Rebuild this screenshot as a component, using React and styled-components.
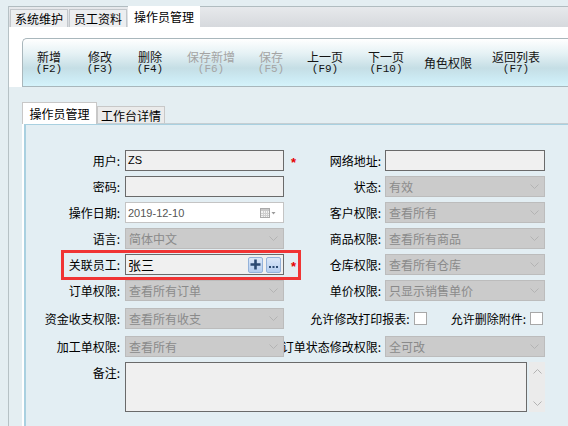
import React from 'react';
import styled, {createGlobalStyle} from 'styled-components';

const GlobalStyle = createGlobalStyle`
  html, body { margin: 0; padding: 0; background: #e4eef2; }
  body {
    font-family: "Noto Sans CJK SC", "Noto Sans", sans-serif;
    font-size: 12px;
    color: #000;
  }
`;

// Shell
const Page = styled.div`
  width: 568px;
  height: 426px;
  overflow: hidden;
  background: #e4eef2;
  padding-left: 8px;
  box-sizing: border-box;
`;
const Frame = styled.div`
  height: 100%;
  border-left: 1px solid #b6c1c5;
`;

// Top tab strip
const TopBar = styled.div`
  display: flex;
  align-items: flex-end;
  height: 20px;
  margin-top: 6px;
  padding-left: 1px;
  border-top: 1px solid #b1bcc0;
  background: linear-gradient(#e7e9ec, #d6d9dd);
`;
const TopTab = styled.div`
  display: flex;
  align-items: center;
  justify-content: center;
  box-sizing: border-box;
  width: ${p => p.$w}px;
  height: ${p => (p.$active ? 21 : 18)}px;
  margin-top: ${p => (p.$active ? -1 : 0)}px;
  padding-bottom: ${p => (p.$active ? 2 : 0)}px;
  background: ${p => (p.$active ? '#fff' : '#eceef0')};
  border: 1px solid ${p => (p.$active ? '#fff' : '#c3c7cb')};
  border-bottom: none;
  margin-right: 1px;
  white-space: nowrap;
`;

// Command ribbon
const Ribbon = styled.div`
  background: #fff;
  padding: 11px 0 0 13px;
`;
const Toolbar = styled.div`
  display: flex;
  height: 49px;
  box-sizing: border-box;
  border: 1px solid #a9b7bc;
  border-right: none;
  border-top-left-radius: 5px;
  background: linear-gradient(#ffffff 0%, #e6f2f5 30%, #c5dee5 62%, #cbe9f2 82%, #d5f3fb 100%);
`;
const ToolButton = styled.div`
  width: ${p => p.$w}px;
  display: flex;
  flex-direction: column;
  align-items: center;
  justify-content: center;
  color: ${p => (p.$off ? '#a4a4a4' : '#141414')};
  line-height: 14px;
`;
const KeyHint = styled.span`
  font-family: "Liberation Mono", monospace;
  font-size: 11px;
  line-height: 11px;
`;

// Body with the inner tabs and form panel
const Body = styled.div`
  padding: 15px 0 0 13px;
`;
const InnerTabs = styled.div`
  display: flex;
  align-items: flex-end;
  height: 21px;
  border-bottom: 1px solid #c5ced2;
`;
const InnerTab = styled.div`
  display: flex;
  align-items: center;
  justify-content: center;
  box-sizing: border-box;
  width: ${p => p.$w}px;
  height: ${p => (p.$active ? 22 : 17)}px;
  margin-bottom: ${p => (p.$active ? -1 : 0)}px;
  background: ${p => (p.$active ? '#fff' : '#ebebeb')};
  border: 1px solid #c8c8c8;
  border-bottom: none;
  white-space: nowrap;
`;
const Panel = styled.div`
  height: 320px;
  background: #e3eef3;
  border-left: 2px solid #fff;
  box-shadow: inset 2px 1px 0 #a9d0e0;
  padding-top: 26px;
`;

// Form rows
const Row = styled.div`
  display: grid;
  grid-template-columns: 101px 159px 101px 160px;
  grid-template-rows: ${p => p.$h || 21}px;
  margin-top: ${p => p.$gap ?? 5}px;
`;
const Cell = styled.div`
  grid-row: 1;
  grid-column: ${p => p.$col};
  min-width: 0;
`;
const Label = styled(Cell)`
  display: flex;
  justify-content: flex-end;
  align-items: ${p => (p.$top ? 'flex-start' : 'center')};
  padding-right: ${p => (p.$col === 1 ? 5 : 4)}px;
  line-height: 21px;
  white-space: nowrap;
  overflow: hidden;
`;
const Star = styled(Cell)`
  justify-self: start;
  align-self: center;
  margin-left: 7px;
  margin-top: 3px;
  color: #e60000;
  font-family: "Liberation Sans", sans-serif;
  font-size: 13px;
  font-weight: bold;
`;
const Highlight = styled(Cell)`
  margin: -4px 84px -5px 37px;
  border: 3px solid #f03434;
  pointer-events: none;
`;
const TextBox = styled(Cell)`
  display: flex;
  align-items: ${p => (p.$top ? 'flex-start' : 'center')};
  gap: 3px;
  box-sizing: border-box;
  border: 1px solid #6a6a6a;
  background: #f0f0f0;
  padding: ${p => (p.$top ? '2px 2px 0 2px' : '0 2px 0 2px')};
  font-size: ${p => (p.$latin ? '11px' : '13px')};
  font-family: ${p => (p.$latin ? '"Liberation Sans", sans-serif' : 'inherit')};
  line-height: 14px;
`;
const Grow = styled.span`
  flex: 1;
`;
const SelectBox = styled(Cell)`
  display: flex;
  align-items: center;
  justify-content: space-between;
  box-sizing: border-box;
  border: 1px solid #bcbcbc;
  background: #cbcbcb;
  color: #8a8a8a;
  padding: 0 5px 0 3px;
`;
const DateBox = styled(Cell)`
  display: flex;
  align-items: center;
  gap: 4px;
  box-sizing: border-box;
  border: 1px solid #c4c4c4;
  background: #fff;
  color: #555;
  padding: 0 7px 0 2px;
  font-family: "Liberation Sans", sans-serif;
  font-size: 11px;
`;
const MiniButton = styled.div`
  width: 15px;
  height: 16px;
  box-sizing: border-box;
  display: flex;
  align-items: center;
  justify-content: center;
  border: 1px solid #94b2da;
  border-radius: 2px;
  background: linear-gradient(#dbe7f8, #b4cdef);
`;
const Checks = styled(Cell)`
  display: flex;
  align-items: center;
  justify-content: flex-end;
  padding-right: 2px;
  white-space: nowrap;
`;
const CheckLabel = styled.span`
  margin-left: ${p => p.$gap || 0}px;
  margin-right: 4px;
`;
const CheckBox = styled.span`
  width: 13px;
  height: 13px;
  box-sizing: border-box;
  border: 1px solid #a8a8a8;
  background: #fff;
`;
const MemoWrap = styled(Cell)`
  display: flex;
  gap: 2px;
`;
const Memo = styled.div`
  flex: 1;
  box-sizing: border-box;
  border: 1px solid #6a6a6a;
  background: #f0f0f0;
`;
const ScrollBar = styled.div`
  width: 16px;
  display: flex;
  flex-direction: column;
  justify-content: space-between;
  align-items: center;
  padding: 7px 0 6px;
  box-sizing: border-box;
  background: #ebebeb;
`;

// Icons
const Chevron = ({up}) => (
  <svg width="9" height="5" viewBox="0 0 9 5">
    <polyline points={up ? '0.5,4.5 4.5,0.5 8.5,4.5' : '0.5,0.5 4.5,4.5 8.5,0.5'}
              fill="none" stroke="#b3b3b3" strokeWidth="1"/>
  </svg>
);

const CalendarIcon = () => (
  <svg width="16" height="10" viewBox="0 0 16 10">
    <rect x="0.5" y="0.5" width="9" height="9" fill="#f3f3f3" stroke="#aaaaaa"/>
    <rect x="1" y="1" width="8" height="2" fill="#c9c9c9"/>
    <path d="M1 5.5h8M1 7.5h8M3.5 3v6M5.5 3v6M7.5 3v6" stroke="#cfcfcf" strokeWidth="1"/>
    <path d="M11.5 4h4l-2 2.5z" fill="#9a9a9a"/>
  </svg>
);

const PlusIcon = () => (
  <svg width="11" height="11" viewBox="0 0 11 11">
    <path d="M5.5 0.5v10M0.5 5.5h10" stroke="#2c4a72" strokeWidth="2.6"/>
  </svg>
);

const DotsIcon = () => (
  <svg width="11" height="11" viewBox="0 0 11 11">
    <rect x="1" y="7" width="2" height="2" fill="#2c4a72"/>
    <rect x="4.5" y="7" width="2" height="2" fill="#2c4a72"/>
    <rect x="8" y="7" width="2" height="2" fill="#2c4a72"/>
  </svg>
);

// Data
const toolButtons = [
  {text: '新增', hint: '(F2)', w: 52},
  {text: '修改', hint: '(F3)', w: 50},
  {text: '删除', hint: '(F4)', w: 50},
  {text: '保存新增', hint: '(F6)', w: 72, off: true},
  {text: '保存', hint: '(F5)', w: 48, off: true},
  {text: '上一页', hint: '(F9)', w: 60},
  {text: '下一页', hint: '(F10)', w: 62},
  {text: '角色权限', w: 62},
  {text: '返回列表', hint: '(F7)', w: 74},
];

const Select = ({col, value}) => (
  <SelectBox $col={col}>
    <span>{value}</span>
    <Chevron/>
  </SelectBox>
);

const App = () => (
  <Page>
    <GlobalStyle/>
    <Frame>
      <TopBar>
        <TopTab $w={58}>系统维护</TopTab>
        <TopTab $w={58}>员工资料</TopTab>
        <TopTab $w={72} $active>操作员管理</TopTab>
      </TopBar>

      <Ribbon>
        <Toolbar>
          {toolButtons.map(b => (
            <ToolButton key={b.text} $w={b.w} $off={b.off}>
              <span>{b.text}</span>
              {b.hint && <KeyHint>{b.hint}</KeyHint>}
            </ToolButton>
          ))}
        </Toolbar>
      </Ribbon>

      <Body>
        <InnerTabs>
          <InnerTab $w={75} $active>操作员管理</InnerTab>
          <InnerTab $w={68}>工作台详情</InnerTab>
        </InnerTabs>
        <Panel>
          <Row $gap={0}>
            <Label $col={1}>用户:</Label>
            <TextBox $col={2} $top $latin>ZS</TextBox>
            <Star $col={3}>*</Star>
            <Label $col={3}>网络地址:</Label>
            <TextBox $col={4}/>
          </Row>
          <Row>
            <Label $col={1}>密码:</Label>
            <TextBox $col={2}/>
            <Label $col={3}>状态:</Label>
            <Select col={4} value="有效"/>
          </Row>
          <Row>
            <Label $col={1}>操作日期:</Label>
            <DateBox $col={2}>
              <Grow>2019-12-10</Grow>
              <CalendarIcon/>
            </DateBox>
            <Label $col={3}>客户权限:</Label>
            <Select col={4} value="查看所有"/>
          </Row>
          <Row>
            <Label $col={1}>语言:</Label>
            <Select col={2} value="简体中文"/>
            <Label $col={3}>商品权限:</Label>
            <Select col={4} value="查看所有商品"/>
          </Row>
          <Row>
            <Label $col={1}>关联员工:</Label>
            <TextBox $col={2}>
              <Grow>张三</Grow>
              <MiniButton><PlusIcon/></MiniButton>
              <MiniButton><DotsIcon/></MiniButton>
            </TextBox>
            <Star $col={3}>*</Star>
            <Label $col={3}>仓库权限:</Label>
            <Select col={4} value="查看所有仓库"/>
            <Highlight $col="1 / 4"/>
          </Row>
          <Row>
            <Label $col={1}>订单权限:</Label>
            <Select col={2} value="查看所有订单"/>
            <Label $col={3}>单价权限:</Label>
            <Select col={4} value="只显示销售单价"/>
          </Row>
          <Row $gap={7}>
            <Label $col={1}>资金收支权限:</Label>
            <Select col={2} value="查看所有收支"/>
            <Checks $col="3 / 5">
              <CheckLabel>允许修改打印报表:</CheckLabel>
              <CheckBox/>
              <CheckLabel $gap={24}>允许删除附件:</CheckLabel>
              <CheckBox/>
            </Checks>
          </Row>
          <Row $gap={7}>
            <Label $col={1}>加工单权限:</Label>
            <Select col={2} value="查看所有"/>
            <Label $col={3}>订单状态修改权限:</Label>
            <Select col={4} value="全可改"/>
          </Row>
          <Row $h={50}>
            <Label $col={1} $top>备注:</Label>
            <MemoWrap $col="2 / 5">
              <Memo/>
              <ScrollBar>
                <Chevron up/>
                <Chevron/>
              </ScrollBar>
            </MemoWrap>
          </Row>
        </Panel>
      </Body>
    </Frame>
  </Page>
);

export default App;
